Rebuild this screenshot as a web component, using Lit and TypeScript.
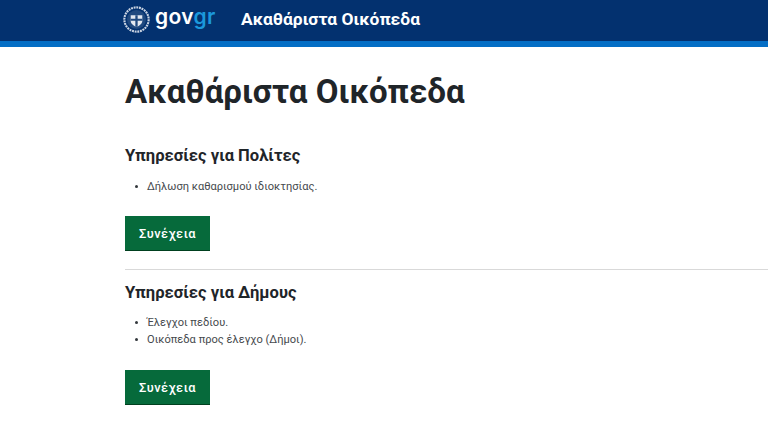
import { LitElement, html, css } from "lit";
import { customElement } from "lit/decorators.js";

@customElement("app-root")
export class AppRoot extends LitElement {
  static styles = css`
    :host { display: block; width: 768px; height: 432px; overflow: hidden; background: #fff; font-family: Roboto, "Noto Sans", sans-serif; color: #1f2529; }
    .header { height: 41px; background: #03316f; border-bottom: 6px solid #046ec5; display: flex; align-items: center; padding-left: 123px; box-sizing: content-box; }
    .emblem { width: 27px; height: 27px; flex: none; margin-top: -3px; }
    .logo { font-family: Inter, sans-serif; font-weight: 600; font-size: 21px; letter-spacing: 0.35px; color: #fff; margin: -8px 0 0 5px; line-height: 26px; width: 61px; }
    .logo span { color: #1b98dc; }
    .title { font-weight: 700; font-size: 17.4px; color: #fff; margin: -3px 0 0 25px; white-space: nowrap; }
    main { padding-left: 125px; }
    h1 { margin: 25px 0 0; font-size: 33px; line-height: 40px; font-weight: 700; color: #1f2529; }
    h2 { margin: 0; font-size: 16.6px; line-height: 22px; font-weight: 700; color: #1f2529; }
    .s1 { margin-top: 33px; }
    ul { list-style: none; margin: 11px 0 0; padding: 0 0 0 9.5px; font-size: 11.1px; line-height: 17px; color: #45494d; }
    ul.l2 { margin-top: 10px; }
    li { display: flex; align-items: center; gap: 9.5px; }
    li::before { content: ""; width: 3px; height: 3px; border-radius: 50%; background: #33383c; flex: none; }
    .btn { display: flex; align-items: center; justify-content: center; width: 85px; height: 35px; box-sizing: border-box; margin-top: 21px; background: #066a3b; border-bottom: 1px solid #00401f; color: #fff; font-size: 12.8px; font-weight: 500; letter-spacing: 0.5px; }
    .b2 { margin-top: 22px; }
    hr { border: 0; height: 1px; background: #d9d9d9; margin: 18px 0 0; }
    .s2 { margin-top: 12px; }
  `;

  render() {
    return html`
      <div class="header">
        <svg class="emblem" viewBox="0 0 28 28">
          <circle cx="14" cy="14" r="12.6" fill="none" stroke="#c9d3e2" stroke-width="2.2" stroke-dasharray="2 0.8"/>
          <circle cx="14" cy="14" r="9.8" fill="#20497f"/>
          <path d="M8 9.5 L20 9.5 L20 15.5 C20 18.5 17 20.5 14 21.5 C11 20.5 8 18.5 8 15.5 Z" fill="#e3e8f0"/>
          <path d="M12.8 9.5h2.4v12h-2.4zM8 13.2h12v2.2H8z" fill="#20497f"/>
        </svg>
        <div class="logo">gov<span>gr</span></div>
        <div class="title">Ακαθάριστα Οικόπεδα</div>
      </div>
      <main>
        <h1>Ακαθάριστα Οικόπεδα</h1>
        <h2 class="s1">Υπηρεσίες για Πολίτες</h2>
        <ul><li>Δήλωση καθαρισμού ιδιοκτησίας.</li></ul>
        <div class="btn">Συνέχεια</div>
        <hr />
        <h2 class="s2">Υπηρεσίες για Δήμους</h2>
        <ul class="l2"><li>Έλεγχοι πεδίου.</li><li>Οικόπεδα προς έλεγχο (Δήμοι).</li></ul>
        <div class="btn b2">Συνέχεια</div>
      </main>
    `;
  }
}
